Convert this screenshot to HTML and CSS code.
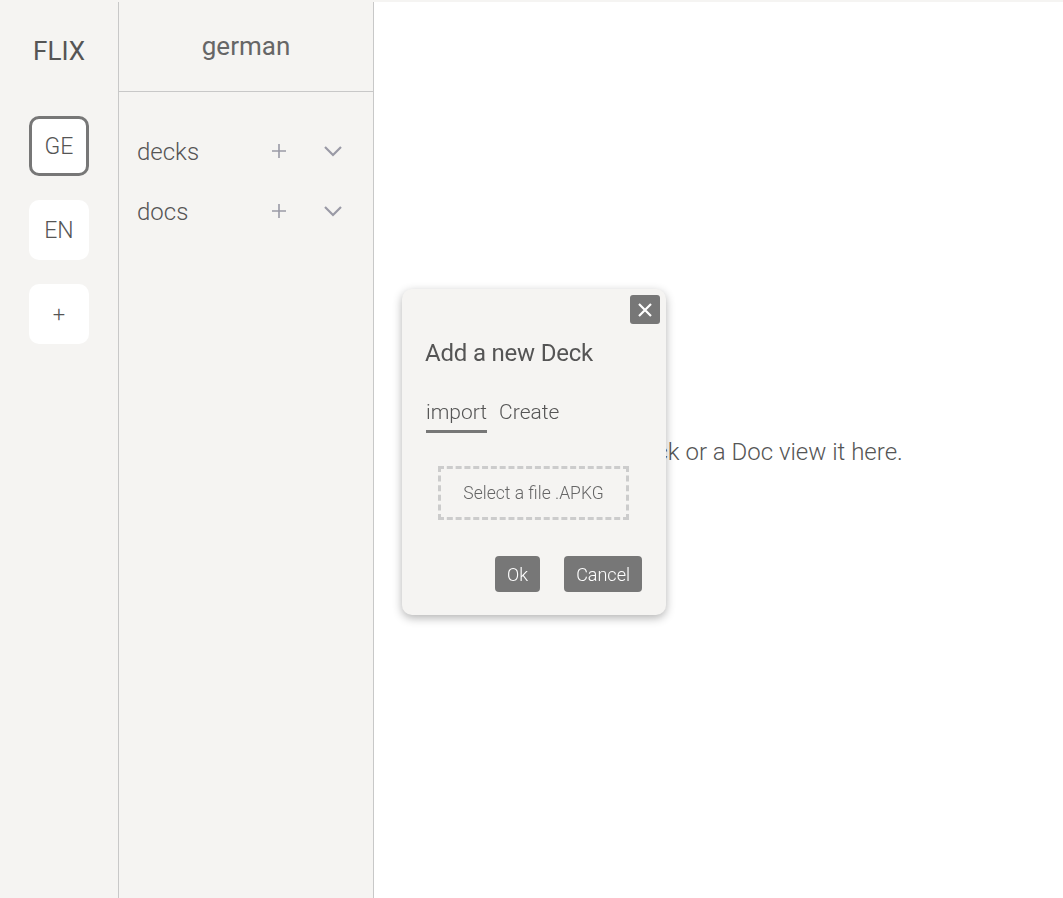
FILE: index.html
```html
<!DOCTYPE html>
<html>
<head>
<meta charset="utf-8">
<link rel="stylesheet" href="styles.css">
</head>
<body>
<div class="app">
  <aside class="langs">
    <div class="logo">FLIX</div>
    <div class="lang lang-active">GE</div>
    <div class="lang">EN</div>
    <div class="lang lang-add">+</div>
  </aside>
  <nav class="panel">
    <div class="panel-head">german</div>
    <ul class="sections">
      <li class="section">
        <span class="section-name">decks</span>
        <svg class="icon-plus" width="16" height="16" viewBox="0 0 16 16"><path d="M8 1v14M1 8h14" stroke="currentColor" stroke-width="1.6" fill="none"/></svg>
        <svg class="icon-chev" width="20" height="12" viewBox="0 0 20 12"><path d="M2 2l8 8 8-8" stroke="currentColor" stroke-width="2.2" fill="none"/></svg>
      </li>
      <li class="section">
        <span class="section-name">docs</span>
        <svg class="icon-plus" width="16" height="16" viewBox="0 0 16 16"><path d="M8 1v14M1 8h14" stroke="currentColor" stroke-width="1.6" fill="none"/></svg>
        <svg class="icon-chev" width="20" height="12" viewBox="0 0 20 12"><path d="M2 2l8 8 8-8" stroke="currentColor" stroke-width="2.2" fill="none"/></svg>
      </li>
    </ul>
  </nav>
  <main class="main">
    <p class="placeholder">Select a Deck or a Doc view it here.</p>
  </main>
</div>

<div class="modal">
  <button class="modal-close" aria-label="close">
    <svg width="16" height="16" viewBox="0 0 16 16"><path d="M2 2l12 12M14 2L2 14" stroke="#fff" stroke-width="2.2" fill="none"/></svg>
  </button>
  <h2 class="modal-title">Add a new Deck</h2>
  <div class="tabs">
    <span class="tab tab-active">import</span>
    <span class="tab">Create</span>
  </div>
  <div class="dropzone">Select a file .APKG</div>
  <div class="actions">
    <button class="btn">Ok</button>
    <button class="btn">Cancel</button>
  </div>
</div>
</body>
</html>
```
FILE: styles.css
```css
* { box-sizing: border-box; }
html, body {
  margin: 0;
  padding: 0;
  height: 100%;
}
body {
  background: #f5f4f2;
  font-family: Roboto, "Liberation Sans", sans-serif;
  color: #555;
  padding-top: 2px;
  overflow: hidden;
}
.app {
  display: flex;
  height: 896px;
}
.langs {
  width: 119px;
  flex: none;
  border-right: 1px solid #c8c8c8;
  background: #f5f4f2;
  display: flex;
  flex-direction: column;
  align-items: center;
}
.logo {
  height: 89px;
  display: flex;
  align-items: center;
  justify-content: center;
  font-size: 26px;
  font-weight: 400;
  color: #555;
  padding-top: 8px;
  margin-bottom: 25px;
}
.lang {
  width: 60px;
  height: 60px;
  background: #fff;
  border-radius: 10px;
  display: flex;
  align-items: center;
  justify-content: center;
  font-size: 23px;
  font-weight: 300;
  color: #555;
  margin-bottom: 24px;
}
.lang-active {
  border: 3px solid #777;
}
.lang-add {
  font-size: 22px;
}
.panel {
  width: 255px;
  flex: none;
  border-right: 1px solid #c8c8c8;
  background: #f5f4f2;
}
.panel-head {
  height: 90px;
  border-bottom: 1px solid #c8c8c8;
  display: flex;
  align-items: center;
  justify-content: center;
  font-size: 26px;
  font-weight: 400;
  color: #666;
  padding-bottom: 1px;
}
.sections {
  list-style: none;
  margin: 0;
  padding: 29px 0 0 18px;
}
.section {
  height: 60px;
  display: flex;
  align-items: center;
}
.section-name {
  font-size: 24px;
  font-weight: 300;
  color: #555;
  width: 134px;
  padding-top: 2px;
}
.icon-plus {
  color: #9a9aa6;
  margin-right: 36px;
}
.icon-chev {
  color: #9a9aa6;
}
.main {
  flex: 1;
  background: #fff;
  display: flex;
  align-items: center;
  justify-content: center;
}
.placeholder {
  margin: 0;
  font-size: 24px;
  font-weight: 300;
  color: #555;
  padding-top: 4px;
  padding-left: 4px;
}
.modal {
  position: fixed;
  left: 402px;
  top: 289px;
  width: 264px;
  height: 326px;
  background: #f5f4f2;
  border-radius: 10px;
  box-shadow: 0 3px 10px rgba(0,0,0,0.3);
  padding: 46px 24px 0 23px;
}
.modal-close {
  position: absolute;
  top: 6px;
  right: 6px;
  width: 30px;
  height: 29px;
  border: none;
  border-radius: 3px;
  background: #777;
  padding: 0;
  display: flex;
  align-items: center;
  justify-content: center;
}
.modal-title {
  margin: 0;
  font-size: 24px;
  font-weight: 400;
  color: #555;
  line-height: 36px;
  letter-spacing: -0.2px;
}
.tabs {
  display: flex;
  gap: 12px;
  margin-top: 29px;
  padding-left: 1px;
}
.tab {
  font-size: 21px;
  font-weight: 300;
  color: #555;
  padding-bottom: 6px;
  border-bottom: 3px solid transparent;
}
.tab-active {
  border-bottom-color: #777;
}
.dropzone {
  margin: 33px 13px 0 13px;
  height: 54px;
  border: 3px dashed #ccc;
  display: flex;
  align-items: center;
  justify-content: center;
  font-size: 17.5px;
  font-weight: 300;
  color: #666;
}
.actions {
  display: flex;
  justify-content: flex-end;
  gap: 24px;
  margin-top: 36px;
  padding-right: 0;
}
.btn {
  height: 36px;
  border: none;
  border-radius: 4px;
  background: #777;
  color: #fff;
  font-family: Roboto, "Liberation Sans", sans-serif;
  font-size: 18px;
  font-weight: 300;
  padding: 0 12px;
}
```
